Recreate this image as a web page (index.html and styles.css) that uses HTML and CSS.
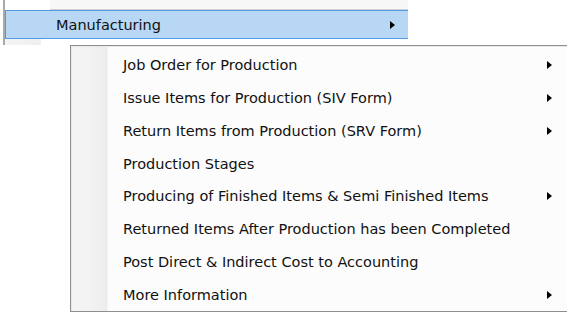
FILE: index.html
```html
<!DOCTYPE html>
<html lang="en">
<head>
    <meta charset="UTF-8">
    <title>Manufacturing Menu</title>
    <link rel="stylesheet" href="styles.css">
</head>
<body>
    <!-- Parent menu (partially visible) -->
    <div class="parent-menu">
        <div class="parent-prev"></div>
        <div class="parent-item active">
            <span class="label">Manufacturing</span>
            <span class="arrow"></span>
        </div>
        <div class="parent-rest"></div>
    </div>

    <!-- Manufacturing submenu -->
    <div class="submenu">
        <div class="item"><span class="label">Job Order for Production</span><span class="arrow"></span></div>
        <div class="item"><span class="label">Issue Items for Production (SIV Form)</span><span class="arrow"></span></div>
        <div class="item"><span class="label">Return Items from Production (SRV Form)</span><span class="arrow"></span></div>
        <div class="item"><span class="label">Production Stages</span></div>
        <div class="item"><span class="label">Producing of Finished Items &amp; Semi Finished Items</span><span class="arrow"></span></div>
        <div class="item"><span class="label">Returned Items After Production has been Completed</span></div>
        <div class="item"><span class="label">Post Direct &amp; Indirect Cost to Accounting</span></div>
        <div class="item"><span class="label">More Information</span><span class="arrow"></span></div>
    </div>
</body>
</html>
```
FILE: styles.css
```css
body {
    margin: 0;
    background: #fff;
    font-family: "DejaVu Sans", Verdana, sans-serif;
    font-size: 14.5px;
    color: #111;
    overflow: hidden;
}
.parent-menu {
    margin-left: 3px;
    width: 403px;
    border-left: 2px solid #a9a9a9;
}
.parent-prev {
    height: 9px;
    margin-left: 45px;
    border-bottom: 1px solid #d0d0d0;
    background: #f7f7f7;
}
.parent-item {
    height: 27px;
    display: flex;
    align-items: center;
    padding-left: 50px;
    padding-right: 13px;
}
.parent-item.active {
    background: #b8d7f4;
    border: 1px solid #4f9be6;
    border-right: none;
}
.parent-item .label {
    flex: 1;
}
.parent-rest {
    height: 6px;
    width: 36px;
    background: linear-gradient(to right, #f4f4f4, #efefef);
}
.submenu {
    margin-left: 70px;
    width: 520px;
    border: 1px solid #8f8f8f;
    border-right: none;
    padding-top: 3px;
    background: linear-gradient(to right, #f5f5f5 0, #f2f2f2 22px, #ececec 36px, #fcfcfc 37px, #fcfcfc 100%);
    box-shadow: inset 1px 1px 0 #e8e8e8;
}
.item {
    height: 32.75px;
    display: flex;
    align-items: center;
    padding-left: 52px;
}
.item .label {
    width: 424px;
    white-space: nowrap;
}
.arrow {
    width: 0;
    height: 0;
    border-top: 4.5px solid transparent;
    border-bottom: 4.5px solid transparent;
    border-left: 5px solid #000;
}
```
